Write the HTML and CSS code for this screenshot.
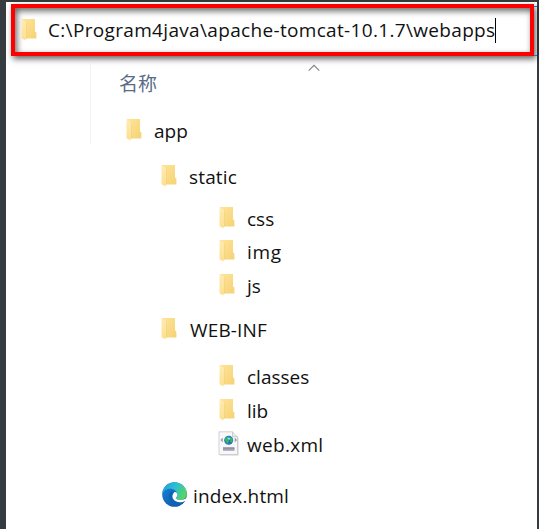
FILE: index.html
```html
<!DOCTYPE html>
<html lang="zh">
<head>
<meta charset="utf-8">
<title>webapps</title>
<link rel="stylesheet" href="styles.css">
</head>
<body>
<svg class="defs" width="0" height="0" aria-hidden="true">
  <defs>
    <linearGradient id="fold" x1="0" y1="0" x2="1" y2="1">
      <stop offset="0" stop-color="#ffe49a"/><stop offset="1" stop-color="#f5d274"/>
    </linearGradient>
    <linearGradient id="flap" x1="0" y1="0" x2="0" y2="1">
      <stop offset="0" stop-color="#ffebb5"/><stop offset="1" stop-color="#fddf8e"/>
    </linearGradient>
    <linearGradient id="edgeTop" x1="0" y1="0.2" x2="1" y2="0.6">
      <stop offset="0" stop-color="#249fe0"/><stop offset=".5" stop-color="#2dc0cf"/><stop offset="1" stop-color="#5bd65a"/>
    </linearGradient>
    <linearGradient id="edgeLow" x1="0" y1="0" x2="1" y2="1">
      <stop offset="0" stop-color="#1687d9"/><stop offset="1" stop-color="#0c4fa0"/>
    </linearGradient>
    <symbol id="folder" viewBox="0 0 16 22">
      <path fill="url(#fold)" d="M1 0h13v12.500l1.400 1V19.400H1z"/>
      <path fill="#e6bd58" d="M5 4v15.400l1-.2V3z" opacity=".5"/>
      <path fill="url(#flap)" d="M.5.3 5.400 3v14.500L4.300 21.500.5 19z"/>
    </symbol>
  </defs>
</svg>
<main class="window">
  <header class="address">
    <svg class="folder"><use href="#folder"/></svg>
    <span class="path">C:\Program4java\apache-tomcat-10.1.7\webapps</span><i class="caret"></i>
  </header>
  <section class="pane">
    <div class="side"></div>
    <div class="list">
      <svg class="sort" viewBox="0 0 12 8"><path d="M.7 6.700 6 1.400l5.300 5.300" fill="none" stroke="#858585" stroke-width="1.200"/></svg>
      <div class="column">名称</div>
      <ul class="tree">
        <li class="row l1"><svg class="folder"><use href="#folder"/></svg><span>app</span></li>
        <li class="row l2 static"><svg class="folder"><use href="#folder"/></svg><span>static</span></li>
        <li class="row l3 first"><svg class="folder"><use href="#folder"/></svg><span>css</span></li>
        <li class="row l3 img"><svg class="folder"><use href="#folder"/></svg><span>img</span></li>
        <li class="row l3"><svg class="folder"><use href="#folder"/></svg><span>js</span></li>
        <li class="row l2 webinf"><svg class="folder"><use href="#folder"/></svg><span>WEB-INF</span></li>
        <li class="row l3 classes"><svg class="folder"><use href="#folder"/></svg><span>classes</span></li>
        <li class="row l3"><svg class="folder"><use href="#folder"/></svg><span>lib</span></li>
        <li class="row l3 xml">
          <svg class="doc" viewBox="0 0 22 26">
            <path d="M2 1.500h13l5.500 5.300v17.700H2z" fill="#d0d0d0"/>
            <path d="M1 .8h13.500l5 5V23.500H1z" fill="#f8f8fa" stroke="#c6c6c8" stroke-width=".8"/>
            <path d="M14.500.8v5h5" fill="#e8e8ea" stroke="#bdbdc0" stroke-width=".7"/>
            <path d="M4.800 7.500 3.300 9l1.500 1.500M16.700 7.500l1.500 1.500-1.500 1.500" fill="none" stroke="#8795a0" stroke-width="1.100"/>
            <circle cx="10.700" cy="9.200" r="4.500" fill="#2872bd"/>
            <path d="M7 7.500 9 5.500l2 .2-1 2.300 1 2-1.500 3-2-2.500zM12.500 6l1.800 1 .5 3-1.800 2-1-2.500z" fill="#35ba62"/>
            <circle cx="11" cy="7.600" r="1.200" fill="#9ad9f3"/>
            <path d="M5 16h11.500v3.800H5z" fill="#aaa5b4"/>
            <path d="M5 17.700h11.500" stroke="#8e8999" stroke-width=".8"/>
          </svg><span>web.xml</span></li>
        <li class="row l2 index">
          <svg class="edge" viewBox="0 0 25 25">
            <circle cx="12.500" cy="12.500" r="12.300" fill="url(#edgeLow)"/>
            <path d="M.3 11.500C1.500 4 6.500.2 12.500.2 20 .2 24.800 6 24.800 11.800c0 4-2.800 6.200-6.300 6.200-2.700 0-4.500-1-4.500-2 0-.8 1.300-1.300 1.300-3.300C15.300 9.500 12 6.800 8 6.800c-3.200 0-6 1.700-7.700 4.700z" fill="url(#edgeTop)"/>
            <path d="M15.300 12.700c0-2-1.500-2.900-3.300-2.500-2.500.6-3.800 3-3 6 .8 3.500 4.200 5.500 8 5.100 2.500-.3 4.500-1.200 6.400-2.400l1.600.7v-4C23.500 17.300 21.300 18 18.500 18 15.800 18 14 17 14 16c0-.8 1.300-1.300 1.300-3.300z" fill="#fff"/>
            <path d="M8 10.500c-2.300 3.800-1 9.500 3.500 11.700 4.300 2 9 .2 11.800-3.300-2.300 1.300-6.300 2.200-9.500.4-3.500-1.800-4.700-6-1.500-9.100-1.500-.9-3.200-.6-4.300.3z" fill="#1062b4"/>
          </svg><span>index.html</span></li>
      </ul>
    </div>
  </section>
</main>
</body>
</html>
```
FILE: styles.css
```css
* { box-sizing: border-box; }
body {
  margin: 0;
  height: 529px;
  overflow: hidden;
  padding: 2px 2px 0 6px;
  background: #363b3f;
  color: #111;
  font: 19px/34px "Open Sans", "Noto Sans CJK SC", sans-serif;
}
.defs { position: absolute; }
.window {
  height: 527px;
  padding: 2px 0 0 5px;
  background: #fff;
}
.address {
  position: relative;
  width: 523px;
  height: 52px;
  display: flex;
  align-items: center;
  padding-left: 6px;
  border: 4px solid #fe0000;
  box-shadow: 2px 3px 6px rgba(0, 0, 0, .6), inset 2px 3px 6px rgba(0, 0, 0, .6);
}
/* address box outline showing past the highlight frame */
.address::after {
  content: "";
  position: absolute;
  left: 519px;
  top: -2px;
  width: 3px;
  height: 48px;
  border: solid #1c78c4;
  border-width: 1px 0;
}
.folder { width: 16px; height: 22px; flex: none; }
.address .folder { margin-top: -1px; }
.path { margin-left: 11px; white-space: nowrap; letter-spacing: .33px; }
.caret { width: 1px; height: 25px; background: #000; }
.pane { display: flex; }
.side {
  width: 80px;
  height: 81px;
  margin-top: 7px;
  border-right: 1px solid #f3f3f3;
}
.list { flex: 1; padding-top: 8px; display: flex; flex-direction: column; }
.sort { width: 12px; height: 8px; margin-left: 217px; }
.column {
  height: 28px;
  margin-left: 28px;
  line-height: 24px;
  color: #5a6b86;
}
.tree { margin: 0; padding: 14px 0 0; list-style: none; }
.row { height: 34px; display: flex; align-items: flex-start; white-space: nowrap; }
.row .folder { margin-top: 5px; }
.row span { margin-left: 12px; }
.l1 { padding-left: 35px; }
.l2 { padding-left: 70px; }
.l3 { padding-left: 128px; }
.static { margin-top: 12px; }
.static span { letter-spacing: .15px; }
.first { margin-top: 8px; }
.img { margin-top: -1px; }
.img span { letter-spacing: .7px; }
.webinf { margin-top: 10px; }
.webinf span { margin-left: 13px; letter-spacing: .15px; }
.classes { margin-top: 13px; }
.doc { width: 22px; height: 26px; margin: 3px 0 0 -1px; }
.xml span { margin-left: 7px; letter-spacing: .3px; }
.index { margin-top: 17px; }
.edge { width: 25px; height: 25px; margin-top: 3px; margin-left: 1px; }
.index span { margin-left: 6px; letter-spacing: .15px; }
```
